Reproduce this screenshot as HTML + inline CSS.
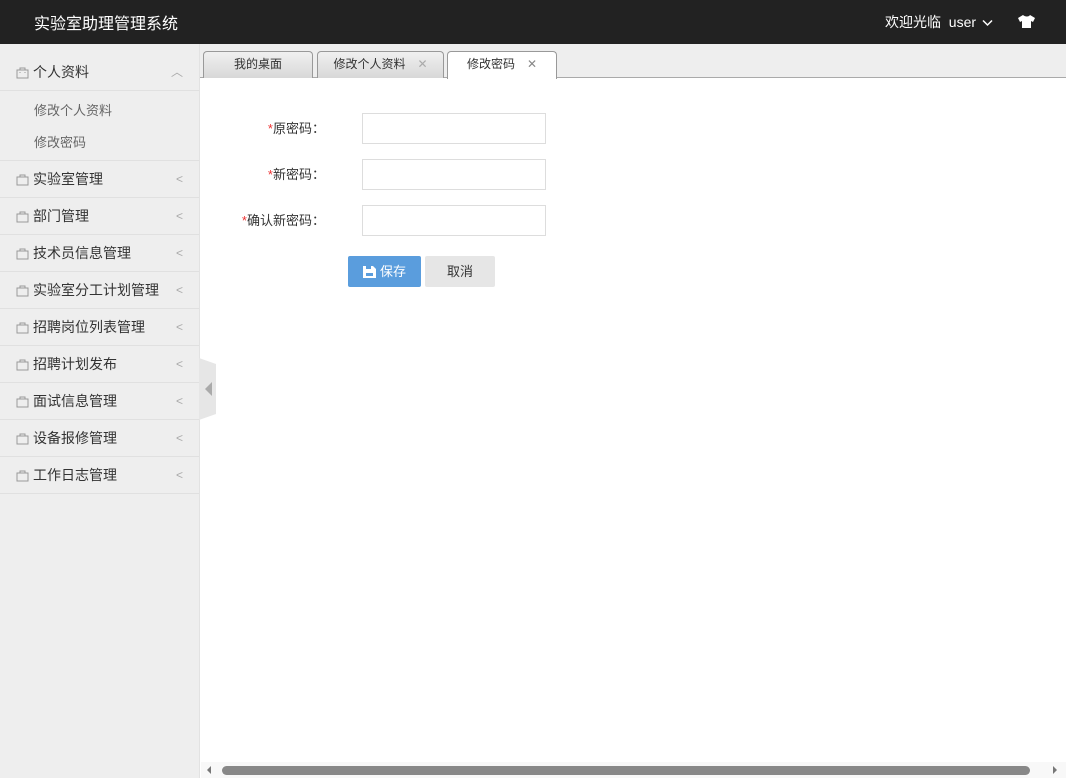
<!DOCTYPE html>
<html><head><meta charset="utf-8"><style>
*{margin:0;padding:0;box-sizing:border-box}
body{width:1066px;height:778px;overflow:hidden;background:#fff;font-family:"Liberation Sans","Noto Sans CJK SC",sans-serif;font-size:14px;color:#333;position:relative}
.top{position:absolute;left:0;top:0;width:1066px;height:44px;background:#222;color:#fff}
.logo{position:absolute;left:34px;top:10px;font-size:16px}
.welcome{position:absolute;left:885px;top:12px;font-size:14px}
.side{position:absolute;left:0;top:44px;width:200px;height:734px;background:#eeeeee;border-right:1px solid #e2e2e2}
.item{height:37px;border-bottom:1px solid #e0e0e0;position:relative;font-size:14px;color:#333;line-height:36px;padding-left:33px}
.item svg{position:absolute;left:16px;top:12px}
.item .ar{position:absolute;right:16px;top:0;color:#aaa;font-size:12px}
.sub{height:70px;border-bottom:1px solid #e0e0e0;padding-top:5px}
.sub div{padding-left:34px;height:32px;line-height:20px;color:#666;font-size:13px;padding-top:5px}
.tabbar{position:absolute;left:200px;top:44px;width:866px;height:34px;background:#eeeeee;border-bottom:1px solid #aaa}
.tab{position:absolute;top:7px;height:27px;line-height:25px;font-size:12px;color:#333;text-align:center;background:linear-gradient(#f0f0f0,#d8d8d8);border:1px solid #999;border-bottom:none;border-radius:4px 4px 0 0}
.tab.on{background:#fff;height:28px}
.x{color:#aaa;margin-left:12px;font-size:12px}
.lbl{position:absolute;width:120px;text-align:right;font-size:13px;color:#333}
.lbl b{color:#e33;font-weight:normal}
.inp{position:absolute;left:362px;width:184px;height:31px;border:1px solid #ddd;background:#fff}
.btn{position:absolute;top:256px;height:31px;line-height:31px;font-size:13px;border-radius:2px;text-align:center}
</style></head><body>
<div class="top"><div class="logo">实验室助理管理系统</div>
<div class="welcome">欢迎光临&nbsp;&nbsp;user <svg width="11" height="8" viewBox="0 0 11 8" style="margin-left:2px"><path d="M1 1.5l4.5 4.5 4.5-4.5" stroke="#fff" stroke-width="1.5" fill="none"/></svg></div>
<svg style="position:absolute;left:1018px;top:15px" width="17" height="13" viewBox="0 0 17 13"><path d="M5 0L0 3l2 4 2-1v7h9V6l2 1 2-4-5-3c-1 2-5 2-7 0z" fill="#fff"/></svg>
</div>
<div class="side">
<div class="item" style="height:47px;line-height:56px"><svg width="13" height="13" viewBox="0 0 13 13" style="top:22px"><path d="M1 4h11v8H1zM4 4V2h5v2M4 6v1M9 6v1" stroke="#999" fill="none"/></svg>个人资料<span class="ar">︿</span></div>
<div class="sub"><div>修改个人资料</div><div>修改密码</div></div>
<div class="item"><svg width="13" height="13" viewBox="0 0 13 13"><path d="M1 4h11v8H1zM4 4V2h5v2" stroke="#999" fill="none"/></svg>实验室管理<span class="ar">&lt;</span></div>
<div class="item"><svg width="13" height="13" viewBox="0 0 13 13"><path d="M1 4h11v8H1zM4 4V2h5v2" stroke="#999" fill="none"/></svg>部门管理<span class="ar">&lt;</span></div>
<div class="item"><svg width="13" height="13" viewBox="0 0 13 13"><path d="M1 4h11v8H1zM4 4V2h5v2" stroke="#999" fill="none"/></svg>技术员信息管理<span class="ar">&lt;</span></div>
<div class="item"><svg width="13" height="13" viewBox="0 0 13 13"><path d="M1 4h11v8H1zM4 4V2h5v2" stroke="#999" fill="none"/></svg>实验室分工计划管理<span class="ar">&lt;</span></div>
<div class="item"><svg width="13" height="13" viewBox="0 0 13 13"><path d="M1 4h11v8H1zM4 4V2h5v2" stroke="#999" fill="none"/></svg>招聘岗位列表管理<span class="ar">&lt;</span></div>
<div class="item"><svg width="13" height="13" viewBox="0 0 13 13"><path d="M1 4h11v8H1zM4 4V2h5v2" stroke="#999" fill="none"/></svg>招聘计划发布<span class="ar">&lt;</span></div>
<div class="item"><svg width="13" height="13" viewBox="0 0 13 13"><path d="M1 4h11v8H1zM4 4V2h5v2" stroke="#999" fill="none"/></svg>面试信息管理<span class="ar">&lt;</span></div>
<div class="item"><svg width="13" height="13" viewBox="0 0 13 13"><path d="M1 4h11v8H1zM4 4V2h5v2" stroke="#999" fill="none"/></svg>设备报修管理<span class="ar">&lt;</span></div>
<div class="item"><svg width="13" height="13" viewBox="0 0 13 13"><path d="M1 4h11v8H1zM4 4V2h5v2" stroke="#999" fill="none"/></svg>工作日志管理<span class="ar">&lt;</span></div>
</div>
<svg style="position:absolute;left:199px;top:358px" width="19" height="62" viewBox="0 0 19 62"><path d="M0 0l17 6v50L0 62z" fill="#e6e6e6"/><path d="M13 24v14l-7-7z" fill="#aaa"/></svg>
<div class="tabbar">
<div class="tab" style="left:3px;width:110px">我的桌面</div>
<div class="tab" style="left:117px;width:127px">修改个人资料<span class="x">✕</span></div>
<div class="tab on" style="left:247px;width:110px">修改密码<span class="x" style="color:#888">✕</span></div>
</div>
<div class="lbl" style="left:205px;top:118px"><b>*</b>原密码：</div>
<div class="inp" style="top:113px"></div>
<div class="lbl" style="left:205px;top:164px"><b>*</b>新密码：</div>
<div class="inp" style="top:159px"></div>
<div class="lbl" style="left:205px;top:210px"><b>*</b>确认新密码：</div>
<div class="inp" style="top:205px"></div>
<div class="btn" style="left:348px;width:73px;background:#5a9ddd;color:#fff"><svg width="13" height="13" viewBox="0 0 13 13" style="vertical-align:-2px;margin-right:4px"><path d="M0 1h10l3 3v9H0z" fill="#fff"/><rect x="3" y="1" width="5" height="3" fill="#5a9ddd"/><rect x="3" y="8" width="7" height="3" fill="#5a9ddd"/></svg>保存</div>
<div class="btn" style="left:425px;width:70px;background:#e6e6e6;color:#333">取消</div>
<div style="position:absolute;left:201px;top:762px;width:865px;height:16px;background:#f8f8f8"></div>
<div style="position:absolute;left:222px;top:766px;width:808px;height:9px;border-radius:5px;background:#888"></div>
<svg style="position:absolute;left:206px;top:765px" width="6" height="10"><path d="M5 1v8L1 5z" fill="#777"/></svg>
<svg style="position:absolute;left:1052px;top:765px" width="6" height="10"><path d="M1 1v8l4-4z" fill="#777"/></svg>
</body></html>
